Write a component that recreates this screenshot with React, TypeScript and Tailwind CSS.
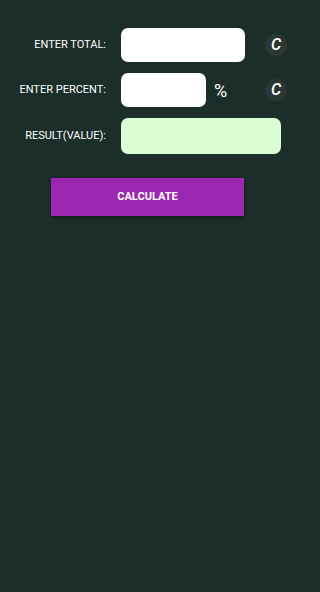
import { useState } from 'react';

const font = { fontFamily: 'Roboto, "Liberation Sans", sans-serif' };

function ClearButton({ onClick }: { onClick: () => void }) {
  return (
    <button
      onClick={onClick}
      className="flex h-[22px] w-[22px] items-center justify-center rounded-full bg-[#2c3734] text-[16px] font-medium italic text-white"
    >
      C
    </button>
  );
}

export default function App() {
  const [total, setTotal] = useState('');
  const [percent, setPercent] = useState('');
  const [result, setResult] = useState('');

  const calculate = () => {
    const t = parseFloat(total);
    const p = parseFloat(percent);
    if (isNaN(t) || isNaN(p)) return;
    setResult(String((t * p) / 100));
  };

  return (
    <div className="min-h-[592px] w-full bg-[#1b2e2a] pt-[28px] text-white" style={font}>
      <div className="flex items-center">
        <span className="w-[106px] text-right text-[11px]">ENTER TOTAL:</span>
        <input
          value={total}
          onChange={(e) => setTotal(e.target.value)}
          className="ml-[15px] h-[34px] w-[124px] rounded-[7px] bg-white px-2 text-[13px] text-black outline-none"
        />
        <div className="ml-[20px]">
          <ClearButton onClick={() => setTotal('')} />
        </div>
      </div>

      <div className="mt-[11px] flex items-center">
        <span className="w-[106px] text-right text-[11px]">ENTER PERCENT:</span>
        <div className="ml-[15px] flex w-[144px] items-center">
          <input
            value={percent}
            onChange={(e) => setPercent(e.target.value)}
            className="h-[34px] w-[85px] rounded-[7px] bg-white px-2 text-[13px] text-black outline-none"
          />
          <span className="ml-[8px] text-[18px]">%</span>
        </div>
        <ClearButton onClick={() => setPercent('')} />
      </div>

      <div className="mt-[11px] flex items-center">
        <span className="w-[106px] text-right text-[11px]">RESULT(VALUE):</span>
        <div className="ml-[15px] flex h-[36px] w-[160px] items-center rounded-[7px] bg-[#dafdd4] px-2 text-[13px] text-black">
          {result}
        </div>
      </div>

      <div className="mt-[24px] pl-[51px]">
        <button
          onClick={calculate}
          className="h-[38px] w-[193px] bg-[#9c27b0] text-[11px] font-bold text-white shadow-[0_1px_3px_rgba(0,0,0,0.5)]"
        >
          CALCULATE
        </button>
      </div>
    </div>
  );
}
